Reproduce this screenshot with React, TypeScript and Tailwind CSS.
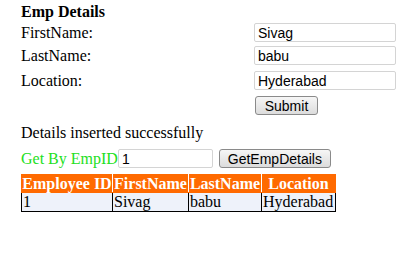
import React from "react";

const inputCls =
  "h-[19px] rounded-[2px] border border-[#d4d4d4] bg-white px-[3px] text-[14px] leading-none text-black outline-none [font-family:'Liberation_Sans',Arial,sans-serif]";

const btnCls =
  "h-[19px] rounded-[3px] border border-[#8a8a8a] bg-gradient-to-b from-[#f6f6f6] to-[#dcdcdc] text-[14px] leading-none text-black [font-family:'Liberation_Sans',Arial,sans-serif]";

const fields = [
  { label: "FirstName:", value: "Sivag" },
  { label: "LastName:", value: "babu" },
  { label: "Location:", value: "Hyderabad" },
];

const cols = [
  { name: "Employee ID", w: "w-[91px]", v: "1" },
  { name: "FirstName", w: "w-[76px]", v: "Sivag" },
  { name: "LastName", w: "w-[73px]", v: "babu" },
  { name: "Location", w: "w-[74px]", v: "Hyderabad" },
];

export default function App() {
  return (
    <div className="h-[253px] w-[419px] bg-white pl-[21px] pt-[3px] text-[16px] text-black [font-family:'Liberation_Serif','Times_New_Roman',serif]">
      <div className="h-[18px] font-bold leading-[18px]">Emp Details</div>

      <div className="mt-[2px] flex flex-col gap-[4px]">
        {fields.map((f, i) => (
          <div key={f.label} className={`flex h-[19px] items-center ${i === 2 ? "mt-[2px]" : ""}`}>
            <span className="w-[233px]">{f.label}</span>
            <input className={`${inputCls} w-[142px]`} defaultValue={f.value} />
          </div>
        ))}
        <div className="mt-[2px] flex h-[19px] items-center pl-[234px]">
          <button className={`${btnCls} w-[63px]`}>Submit</button>
        </div>
      </div>

      <div className="mt-[9px] h-[18px] leading-[18px]">Details inserted successfully</div>

      <div className="mt-[7px] flex h-[19px] items-center">
        <span className="text-[#22e022]">Get By EmpID</span>
        <input className={`${inputCls} ml-0 w-[95px]`} defaultValue="1" />
        <button className={`${btnCls} ml-[6px] w-[112px]`}>GetEmpDetails</button>
      </div>

      <table className="mt-[6px] border-collapse">
        <thead>
          <tr className="bg-[#ff6a00] text-white">
            {cols.map((c) => (
              <th
                key={c.name}
                className={`${c.w} h-[18px] whitespace-nowrap border border-[#ff6a00] border-r-white px-0 text-center font-bold leading-[16px] last:border-r-[#ff6a00]`}
              >
                {c.name}
              </th>
            ))}
          </tr>
        </thead>
        <tbody>
          <tr className="bg-[#eef2fa]">
            {cols.map((c) => (
              <td
                key={c.name}
                className={`${c.w} h-[19px] whitespace-nowrap border border-black px-[1px] leading-[16px]`}
              >
                {c.v}
              </td>
            ))}
          </tr>
        </tbody>
      </table>
    </div>
  );
}
